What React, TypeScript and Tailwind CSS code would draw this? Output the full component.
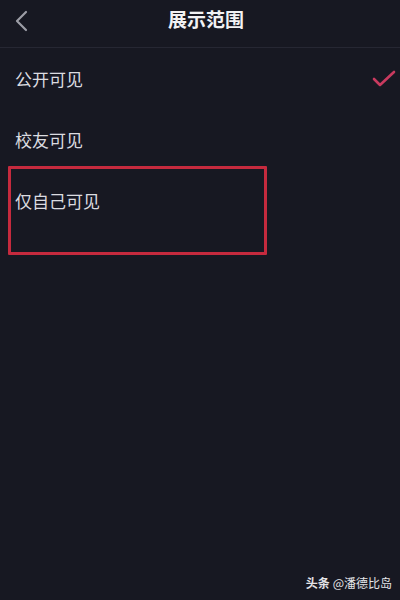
const options = [
    { label: '公开可见', checked: true },
    { label: '校友可见', checked: false },
    { label: '仅自己可见', checked: false },
];

function BackIcon() {
    return (
        <svg width="14" height="22" viewBox="0 0 14 22" fill="none">
            <path d="M12 2 L3 11 L12 20" stroke="#9c9da6" strokeWidth="2.2" strokeLinecap="round" strokeLinejoin="round" />
        </svg>
    );
}

function CheckIcon() {
    return (
        <svg width="24" height="18" viewBox="0 0 24 18" fill="none">
            <path d="M2 9 L8 15 L22 2" stroke="#c93a5f" strokeWidth="2.6" strokeLinecap="round" strokeLinejoin="round" />
        </svg>
    );
}

export default function App() {
    return (
        <div
            className="relative w-[400px] h-[600px] bg-[#171822] overflow-hidden"
            style={{ fontFamily: '"Noto Sans CJK SC", "Noto Sans", sans-serif' }}
        >
            {/* header */}
            <div className="relative flex items-center justify-center h-[48px] border-b border-[#262733]">
                <div className="absolute left-[14px] top-[10px]">
                    <BackIcon />
                </div>
                <span className="text-[19px] font-bold text-[#f2f2f4] pl-[12px] pb-[8px]">展示范围</span>
            </div>

            {/* options */}
            <div className="flex flex-col pt-[1px]">
                {options.map((o) => (
                    <div key={o.label} className="flex items-center justify-between h-[61px] pl-[15px] pr-[4px] pb-[1px]">
                        <span className="text-[17px] text-[#dcdce0]">{o.label}</span>
                        {o.checked && <CheckIcon />}
                    </div>
                ))}
            </div>

            {/* highlight annotation */}
            <div className="absolute left-[8px] top-[166px] w-[259px] h-[89px] border-[3px] border-[#c52a3e] rounded-[1px]" />

            {/* watermark */}
            <div className="absolute right-[8px] bottom-[8px] flex items-center gap-[3px] text-[12px] text-[#e4e4e8]">
                <span className="font-bold">头条</span>
                <span>@潘德比岛</span>
            </div>
        </div>
    );
}
